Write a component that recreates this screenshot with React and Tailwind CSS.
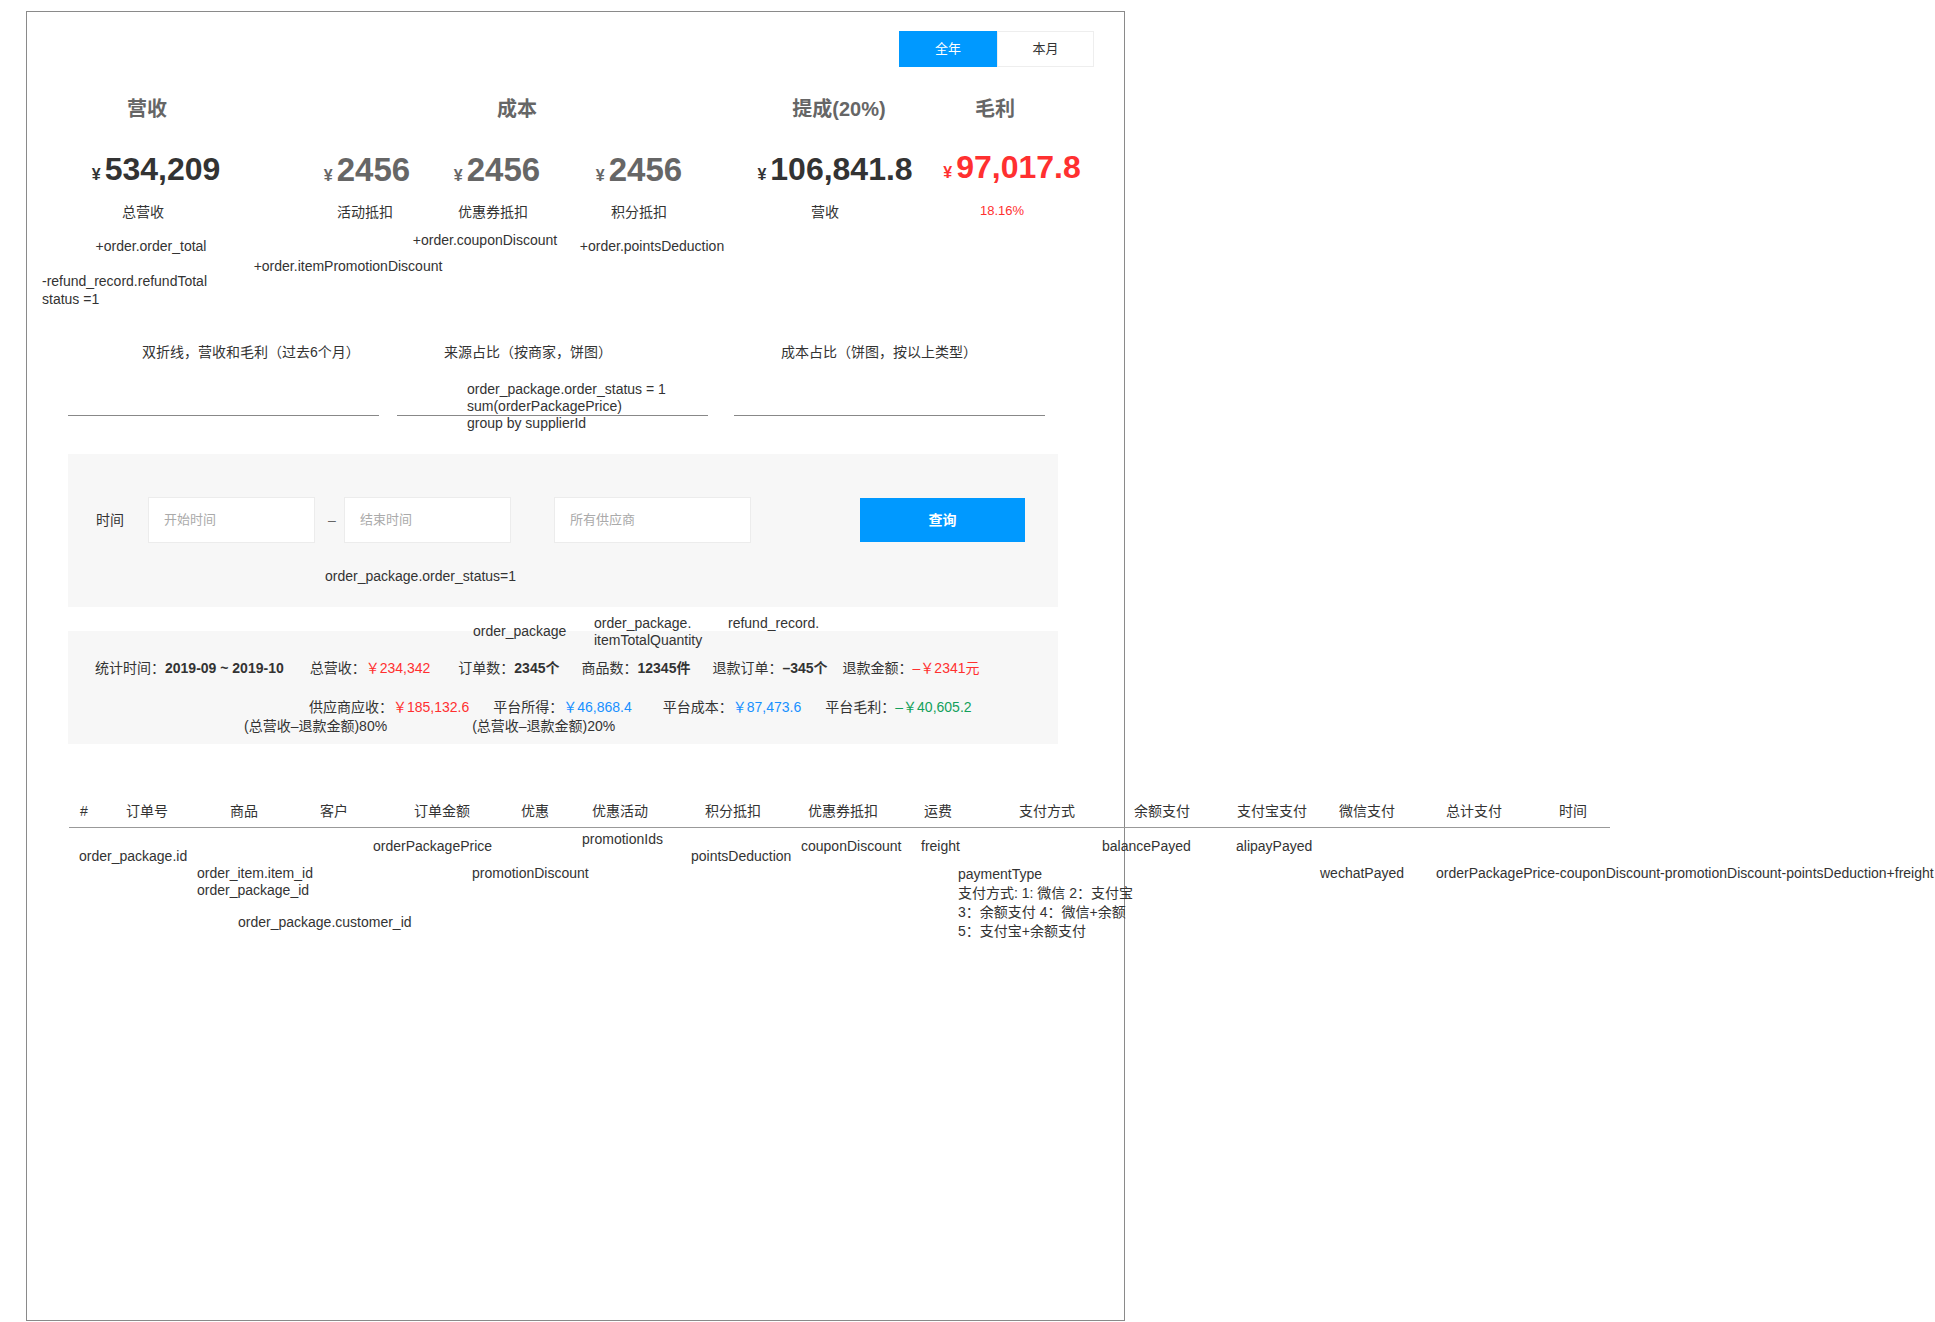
import React from 'react'

const HEADERS = [
  ['#', 46], ['订单号', 104], ['商品', 90], ['客户', 94], ['订单金额', 107], ['优惠', 71],
  ['优惠活动', 113], ['积分抵扣', 103], ['优惠券抵扣', 116], ['运费', 95], ['支付方式', 115],
  ['余额支付', 103], ['支付宝支付', 102], ['微信支付', 107], ['总计支付', 113], ['时间', 50],
]

function Money({ value, color = 'text-[#333]', size = 'text-[32px]', className = '' }) {
  return (
    <div className={`flex items-baseline whitespace-nowrap font-bold leading-none ${color} ${className}`}>
      <span className="mr-[4px] text-[16px]">¥</span>
      <span className={size}>{value}</span>
    </div>
  )
}

function Note({ children, className = '' }) {
  return <div className={`whitespace-nowrap text-[14px] leading-[17px] text-[#333] ${className}`}>{children}</div>
}

export default function App() {
  return (
    <div className="min-h-[1322px] bg-white pl-[26px] pt-[11px] font-['Liberation_Sans','Noto_Sans_CJK_SC',sans-serif] text-[#333]">
      <div className="h-[1310px] w-[1099px] border border-[#8a8a8a]">

        {/* 全年 / 本月 */}
        <div className="flex justify-end pr-[30px] pt-[19px]">
          <div className="flex h-[36px] text-[13px]">
            <button className="h-[36px] w-[98px] bg-[#0099ff] text-white">全年</button>
            <button className="h-[36px] w-[97px] border border-[#eee] bg-white text-[#333]">本月</button>
          </div>
        </div>

        {/* 标题 */}
        <div className="mt-[32px] flex text-[20px] font-bold leading-[20px] text-[#666]">
          <div className="ml-[60px] w-[120px] text-center">营收</div>
          <div className="ml-[250px] w-[120px] text-center">成本</div>
          <div className="ml-[202px] w-[120px] text-center">提成(20%)</div>
          <div className="ml-[36px] w-[120px] text-center">毛利</div>
        </div>

        {/* 数字 */}
        <div className="mt-[34px] flex h-[160px] items-start">
          <div className="ml-[64px] flex w-[120px] flex-col items-center">
            <Money value="534,209" className="ml-[10px]" />
            <div className="mr-[16px] mt-[20px] text-[14px] leading-none">总营收</div>
            <Note className="mt-[19px]">+order.order_total</Note>
            <Note className="-ml-[49px] mt-[17px] self-start leading-[18px]">
              -refund_record.refundTotal<br />status =1
            </Note>
          </div>
          <div className="ml-[94px] flex w-[120px] flex-col items-center">
            <Money value="2456" color="text-[#666]" size="text-[33px]" className="ml-[4px]" />
            <div className="mt-[19px] text-[14px] leading-none">活动抵扣</div>
            <Note className="mr-[34px] mt-[39px]">+order.itemPromotionDiscount</Note>
          </div>
          <div className="ml-[8px] flex w-[120px] flex-col items-center">
            <Money value="2456" color="text-[#666]" size="text-[33px]" className="ml-[8px]" />
            <div className="mt-[19px] text-[14px] leading-none">优惠券抵扣</div>
            <Note className="mr-[16px] mt-[13px]">+order.couponDiscount</Note>
          </div>
          <div className="ml-[26px] flex w-[120px] flex-col items-center">
            <Money value="2456" color="text-[#666]" size="text-[33px]" />
            <div className="mt-[19px] text-[14px] leading-none">积分抵扣</div>
            <Note className="ml-[26px] mt-[19px]">+order.pointsDeduction</Note>
          </div>
          <div className="ml-[73px] flex w-[120px] flex-col items-center">
            <Money value="106,841.8" className="ml-[6px]" />
            <div className="mr-[14px] mt-[20px] text-[14px] leading-none">营收</div>
          </div>
          <div className="ml-[55px] flex w-[120px] flex-col items-center">
            <Money value="97,017.8" color="text-[#ff3030]" className="-mt-[2px] ml-[10px]" />
            <div className="mr-[10px] mt-[21px] text-[13px] leading-none text-[#ff3030]">18.16%</div>
          </div>
        </div>

        {/* 图表占位 */}
        <div className="ml-[41px] mt-[32px] flex text-[14px]">
          <div className="w-[311px]">
            <div className="pl-[74px] leading-none">双折线，营收和毛利（过去6个月）</div>
            <div className="mt-[56px] h-px bg-[#888]" />
          </div>
          <div className="relative ml-[18px] w-[311px]">
            <div className="pl-[47px] leading-none">来源占比（按商家，饼图）</div>
            <div className="mt-[56px] h-px bg-[#888]" />
            <Note className="absolute left-[70px] top-[36px]">
              order_package.order_status = 1<br />sum(orderPackagePrice)<br />group by supplierId
            </Note>
          </div>
          <div className="ml-[26px] w-[311px]">
            <div className="pl-[47px] leading-none">成本占比（饼图，按以上类型）</div>
            <div className="mt-[56px] h-px bg-[#888]" />
          </div>
        </div>

        {/* 查询条件 */}
        <div className="ml-[41px] mt-[38px] h-[153px] w-[990px] bg-[#f7f7f7] pl-[28px] pt-[43px]">
          <div className="flex h-[46px] items-center text-[14px]">
            <span>时间</span>
            <div className="ml-[24px] flex h-[46px] w-[167px] items-center border border-[#ececec] bg-white pl-[15px] text-[13px] text-[#aaa]">开始时间</div>
            <div className="flex w-[29px] justify-center pl-[5px] text-[#666]">–</div>
            <div className="flex h-[46px] w-[167px] items-center border border-[#ececec] bg-white pl-[15px] text-[13px] text-[#aaa]">结束时间</div>
            <div className="ml-[43px] flex h-[46px] w-[197px] items-center border border-[#ececec] bg-white pl-[15px] text-[13px] text-[#aaa]">所有供应商</div>
            <button className="ml-[109px] h-[44px] w-[165px] bg-[#0099ff] text-[14px] font-bold text-white">查询</button>
          </div>
          <Note className="ml-[229px] mt-[25px]">order_package.order_status=1</Note>
        </div>

        {/* 统计 */}
        <div className="relative ml-[41px] mt-[24px] h-[113px] w-[990px] bg-[#f7f7f7] text-[14px] leading-[18px]">
          <Note className="absolute left-[405px] -top-[8px]">order_package</Note>
          <Note className="absolute left-[526px] -top-[16px]">order_package.<br />itemTotalQuantity</Note>
          <Note className="absolute left-[660px] -top-[16px]">refund_record.</Note>

          <div className="flex whitespace-nowrap pl-[27px] pt-[28px]">
            <span>统计时间：</span><span className="font-bold">2019-09 ~ 2019-10</span>
            <span className="ml-[26px]">总营收：</span><span className="text-[#ff3030]">￥234,342</span>
            <span className="ml-[28px]">订单数：</span><span className="font-bold">2345个</span>
            <span className="ml-[22px]">商品数：</span><span className="font-bold">12345件</span>
            <span className="ml-[22px]">退款订单：</span><span className="font-bold">–345个</span>
            <span className="ml-[15px]">退款金额：</span><span className="text-[#ff3030]">–￥2341元</span>
          </div>
          <div className="mt-[21px] flex whitespace-nowrap pl-[241px]">
            <span>供应商应收：</span><span className="text-[#ff3030]">￥185,132.6</span>
            <span className="ml-[24px]">平台所得：</span><span className="text-[#1890ff]">￥46,868.4</span>
            <span className="ml-[31px]">平台成本：</span><span className="text-[#1890ff]">￥87,473.6</span>
            <span className="ml-[24px]">平台毛利：</span><span className="text-[#13a05b]">–￥40,605.2</span>
          </div>
          <div className="mt-[1px] flex whitespace-nowrap pl-[176px]">
            <span>(总营收–退款金额)80%</span>
            <span className="ml-[85px]">(总营收–退款金额)20%</span>
          </div>
        </div>

        {/* 订单表 */}
        <div className="ml-[42px] mt-[59px] flex w-[1541px] border-b border-[#999] pb-[7px] pl-[11px] text-[14px] leading-[17px]">
          {HEADERS.map(([label, w]) => (
            <div key={label} className="shrink-0 whitespace-nowrap" style={{ width: w }}>{label}</div>
          ))}
        </div>
        <div className="ml-[42px] flex pl-[11px]">
          <div className="w-[46px] shrink-0"><Note className="-ml-[1px] mt-[20px]">order_package.id</Note></div>
          <div className="w-[104px] shrink-0"><Note className="ml-[71px] mt-[37px]">order_item.item_id<br />order_package_id</Note></div>
          <div className="w-[90px] shrink-0"><Note className="ml-[8px] mt-[86px]">order_package.customer_id</Note></div>
          <div className="w-[94px] shrink-0"><Note className="ml-[53px] mt-[10px]">orderPackagePrice</Note></div>
          <div className="w-[107px] shrink-0"><Note className="ml-[58px] mt-[37px]">promotionDiscount</Note></div>
          <div className="w-[71px] shrink-0"><Note className="ml-[61px] mt-[3px]">promotionIds</Note></div>
          <div className="w-[113px] shrink-0"><Note className="ml-[99px] mt-[20px]">pointsDeduction</Note></div>
          <div className="w-[103px] shrink-0"><Note className="ml-[96px] mt-[10px]">couponDiscount</Note></div>
          <div className="w-[116px] shrink-0" />
          <div className="w-[95px] shrink-0">
            <Note className="-ml-[3px] mt-[10px]">freight</Note>
            <Note className="ml-[34px] mt-[10px] leading-[19px]">
              paymentType<br />支付方式: 1: 微信 2：支付宝<br />3：余额支付 4：微信+余额<br />5：支付宝+余额支付
            </Note>
          </div>
          <div className="w-[115px] shrink-0"><Note className="ml-[83px] mt-[10px]">balancePayed</Note></div>
          <div className="w-[103px] shrink-0" />
          <div className="w-[102px] shrink-0"><Note className="-ml-[1px] mt-[10px]">alipayPayed</Note></div>
          <div className="w-[107px] shrink-0"><Note className="-ml-[19px] mt-[37px]">wechatPayed</Note></div>
          <div className="w-[113px] shrink-0"><Note className="-ml-[10px] mt-[37px]">orderPackagePrice-couponDiscount-promotionDiscount-pointsDeduction+freight</Note></div>
        </div>
      </div>
    </div>
  )
}
